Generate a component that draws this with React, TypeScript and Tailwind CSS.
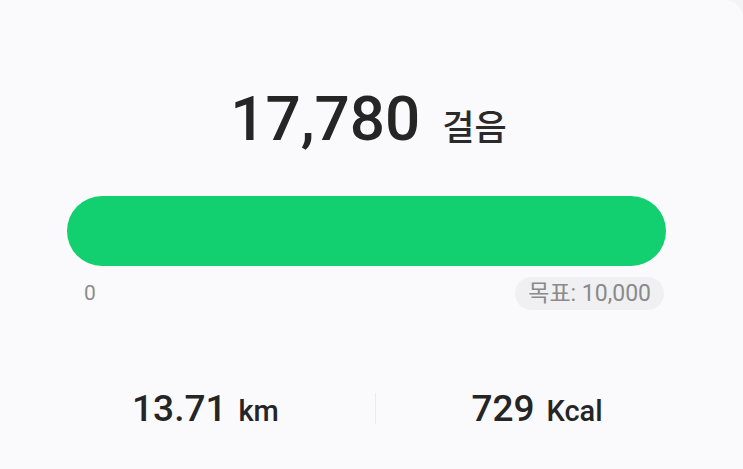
import React from "react";

export default function App() {
  return (
    <div
      className="w-[743px] h-[469px] overflow-hidden bg-[#f3f3f5]"
      style={{ fontFamily: "Roboto, 'Noto Sans CJK KR', sans-serif" }}
    >
      <div className="flex flex-col w-full h-full bg-[#fafafc] rounded-tr-[18px]">
        <div className="flex items-baseline justify-center gap-[22px] pt-[88px] pr-[6px] h-[146px]">
          <span className="text-[62px] font-medium leading-none text-[#252525]">17,780</span>
          <span className="text-[35px] font-medium leading-none text-[#2a2a2a]">걸음</span>
        </div>
        <div className="pl-[67px] pr-[77px] mt-[50px]">
          <div className="h-[70px] rounded-full bg-[#12cf6f]" />
          <div className="flex items-center justify-between mt-[11px]">
            <span className="pl-[17px] text-[21px] text-[#8c8c8c] leading-none">0</span>
            <span className="h-[33px] px-[13px] flex items-center rounded-full bg-[#f0f0f2] text-[23px] text-[#8a8a8a] leading-none mr-[2px]">
              목표: 10,000
            </span>
          </div>
        </div>
        <div className="flex items-center pl-[36px] mt-[80px]">
          <div className="w-[339px] flex items-baseline justify-center gap-[12px]">
            <span className="text-[37px] font-medium text-[#252525] leading-none">13.71</span>
            <span className="text-[29px] font-medium text-[#252525] leading-none">km</span>
          </div>
          <div className="w-px h-[31px] bg-[#ececee]" />
          <div className="w-[322px] flex items-baseline justify-center gap-[12px]">
            <span className="text-[37px] font-medium text-[#252525] leading-none">729</span>
            <span className="text-[29px] font-medium text-[#252525] leading-none">Kcal</span>
          </div>
        </div>
      </div>
    </div>
  );
}
